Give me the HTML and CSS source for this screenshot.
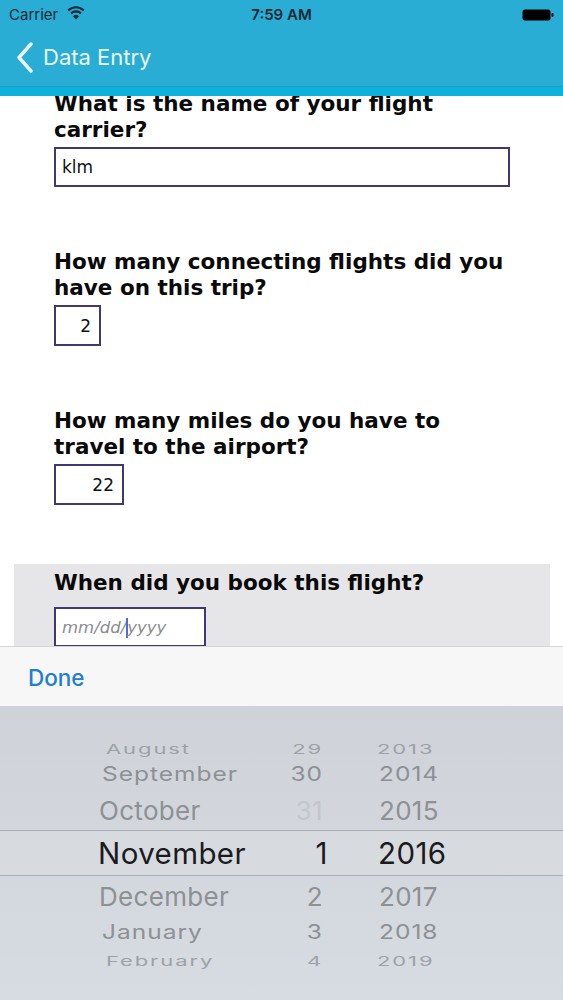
FILE: index.html
```html
<!DOCTYPE html>
<html lang="en">
<head>
  <meta charset="UTF-8" />
  <meta name="viewport" content="width=device-width, initial-scale=1.0"/>
  <title>Data Entry</title>
  <link rel="stylesheet" href="styles.css">
</head>
<body>
  <div class="screen">
    <div class="topbar">
      <div class="status">
        <div class="status-left">
          <span>Carrier</span>
          <svg class="wifi" width="18" height="14" viewBox="0 0 18 14">
            <path d="M9 13.4 L6 10.3 A4.3 4.3 0 0 1 12 10.3 Z" fill="#0b2834"/>
            <path d="M4 7.4 A7.1 7.1 0 0 1 14 7.4" fill="none" stroke="#0b2834" stroke-width="2.1"/>
            <path d="M1.2 4.5 A11 11 0 0 1 16.8 4.5" fill="none" stroke="#0b2834" stroke-width="2.1"/>
          </svg>
        </div>
        <div class="status-time">7:59 AM</div>
        <div class="status-right">
          <svg width="32" height="12" viewBox="0 0 32 12">
            <rect x="0.5" y="0.5" width="28" height="11" rx="2.5" fill="#000"/>
            <rect x="29.5" y="4" width="2" height="4" rx="1" fill="#000"/>
          </svg>
        </div>
      </div>
      <div class="navbar">
        <svg class="back" width="18" height="32" viewBox="0 0 18 32">
          <path d="M15 2 L3 15.5 L15 29" fill="none" stroke="#e9f7fb" stroke-width="3.4" stroke-linecap="round" stroke-linejoin="round"/>
        </svg>
        <span class="nav-title">Data Entry</span>
      </div>
      <div class="stripe"></div>
    </div>

    <div class="content">
      <div class="form">
        <div class="group">
          <label class="question">What is the name of your flight carrier?</label>
          <input class="field field-wide" type="text" value="klm">
        </div>

        <div class="group">
          <label class="question">How many connecting flights did you have on this trip?</label>
          <input class="field field-num field-xs" type="text" value="2">
        </div>

        <div class="group">
          <label class="question">How many miles do you have to travel to the airport?</label>
          <input class="field field-num field-sm" type="text" value="22">
        </div>

        <div class="group group-active">
          <label class="question">When did you book this flight?</label>
          <div class="field field-date"><span class="ph">mm/dd/</span><span class="caret"></span><span class="ph">yyyy</span></div>
        </div>
      </div>
    </div>

    <div class="keyboard">
      <div class="toolbar">
        <span class="done">Done</span>
      </div>
      <div class="picker">
        <div class="prow far r-aug"><span class="m">August</span><span class="d">29</span><span class="y">2013</span></div>
        <div class="prow mid r-sep"><span class="m">September</span><span class="d">30</span><span class="y">2014</span></div>
        <div class="prow near r-oct"><span class="m">October</span><span class="d off">31</span><span class="y">2015</span></div>
        <div class="prow selected"><span class="m">November</span><span class="d">1</span><span class="y">2016</span></div>
        <div class="prow near r-dec"><span class="m">December</span><span class="d">2</span><span class="y">2017</span></div>
        <div class="prow mid r-jan"><span class="m">January</span><span class="d">3</span><span class="y">2018</span></div>
        <div class="prow far r-feb"><span class="m">February</span><span class="d">4</span><span class="y">2019</span></div>
      </div>
    </div>
  </div>
</body>
</html>
```

FILE: styles.css
```css
body {
  margin: 0;
  padding: 0;
  background-color: #fff;
  font-family: 'DejaVu Sans', sans-serif;
}

.screen {
  width: 563px;
  height: 1000px;
  display: flex;
  flex-direction: column;
  overflow: hidden;
}

/* top: status bar + nav */
.topbar {
  background-color: #29add4;
  font-family: 'Inter', 'Liberation Sans', sans-serif;
  position: relative;
  z-index: 2;
}

.status {
  height: 28px;
  display: flex;
  align-items: center;
  justify-content: space-between;
  padding: 0 9px 0 9px;
  color: #0b2834;
  font-size: 15px;
}

.status-left {
  display: flex;
  align-items: center;
  gap: 9px;
  width: 120px;
}

.wifi {
  margin-top: -3px;
}

.status-time {
  font-weight: 600;
}

.status-right {
  width: 120px;
  display: flex;
  justify-content: flex-end;
  padding-top: 1px;
}

.navbar {
  height: 59px;
  display: flex;
  align-items: center;
  padding-left: 16px;
  gap: 9px;
  border-bottom: 1px solid #1d9dc4;
  box-sizing: border-box;
}

.back {
  margin-top: 1px;
}

.nav-title {
  color: #e9f7fb;
  font-size: 22px;
  margin-top: -1px;
}

.stripe {
  height: 9px;
  background-color: #0eb0dc;
}

/* form */
.content {
  flex: 1;
  overflow: hidden;
  padding: 0 13px 0 14px;
}

.form {
  margin-top: -7px;
}

.group {
  padding: 2px 40px 5px;
  margin-bottom: 55px;
}

.group-active {
  background-color: #e6e6e9;
  padding-top: 6px;
  margin-top: -1px;
}

.question {
  display: block;
  font-weight: bold;
  font-size: 21.5px;
  line-height: 26px;
  color: #0a0a0a;
  margin-bottom: 4px;
}

.field {
  display: block;
  box-sizing: border-box;
  height: 40px;
  border: 2px solid #403872;
  background-color: #fff;
  font-family: 'DejaVu Sans', sans-serif;
  font-size: 17px;
  color: #111;
  padding: 0 6px;
  margin: 0;
  outline: none;
  border-radius: 0;
}

.field-wide {
  width: 100%;
}

.field-num {
  text-align: right;
  padding-right: 8px;
  height: 41px;
}

.field-xs {
  width: 47px;
}

.field-sm {
  width: 70px;
}

.field-date {
  width: 152px;
  display: flex;
  align-items: center;
  padding-left: 6px;
  margin-top: 11px;
}

.ph {
  color: #8c8c92;
  font-style: italic;
  font-size: 16.5px;
}

.caret {
  width: 2px;
  height: 20px;
  background-color: #4a6ee0;
  margin: 2px -1px 0 0;
}

/* keyboard accessory + picker */
.keyboard {
  height: 354px;
  font-family: 'Inter', 'Liberation Sans', sans-serif;
}

.toolbar {
  height: 60px;
  box-sizing: border-box;
  background-color: #f7f7f8;
  border-top: 1px solid #d6d6d9;
  display: flex;
  align-items: center;
  padding-left: 28px;
}

.done {
  color: #207ed6;
  font-size: 22.5px;
  font-weight: 500;
  margin-top: 2px;
}

.picker {
  height: 294px;
  box-sizing: border-box;
  background: linear-gradient(#cfd3d9, #d7dce2);
  padding-top: 30px;
  display: flex;
  flex-direction: column;
}

.prow {
  display: grid;
  grid-template-columns: 185px 40px 1fr;
  align-items: center;
  padding-left: 98px;
  color: #8d9095;
  white-space: nowrap;
}

.prow .d {
  text-align: right;
}

.prow .y {
  padding-left: 56px;
}

.prow .off {
  color: #c3c6cb;
}

.far {
  height: 22px;
  font-size: 22px;
  color: #9da1a7;
  letter-spacing: 1.9px;
}

.far span {
  display: block;
  transform: scaleY(0.6);
}

.mid {
  height: 32px;
  font-size: 24.5px;
  letter-spacing: 1px;
}

.mid span {
  display: block;
  transform: scaleY(0.82);
}

.near {
  height: 40px;
  font-size: 26px;
  letter-spacing: 0.3px;
}

.selected {
  height: 46px;
  font-size: 29.5px;
  color: #1b1b1d;
  letter-spacing: 0.4px;
  box-sizing: border-box;
  border-top: 1px solid #a9acb2;
  border-bottom: 1px solid #a9acb2;
  background-color: #d7dadf;
  grid-template-columns: 185px 45px 1fr;
}

.selected .y {
  padding-left: 50px;
}

.r-aug, .r-feb {
  padding-left: 106px;
  grid-template-columns: 177px 40px 1fr;
}

.r-aug .y, .r-feb .y {
  padding-left: 54px;
}

.r-sep, .r-jan {
  padding-left: 102px;
  grid-template-columns: 181px 40px 1fr;
}

.r-oct, .r-dec {
  padding-left: 99px;
  grid-template-columns: 184px 40px 1fr;
}
```
